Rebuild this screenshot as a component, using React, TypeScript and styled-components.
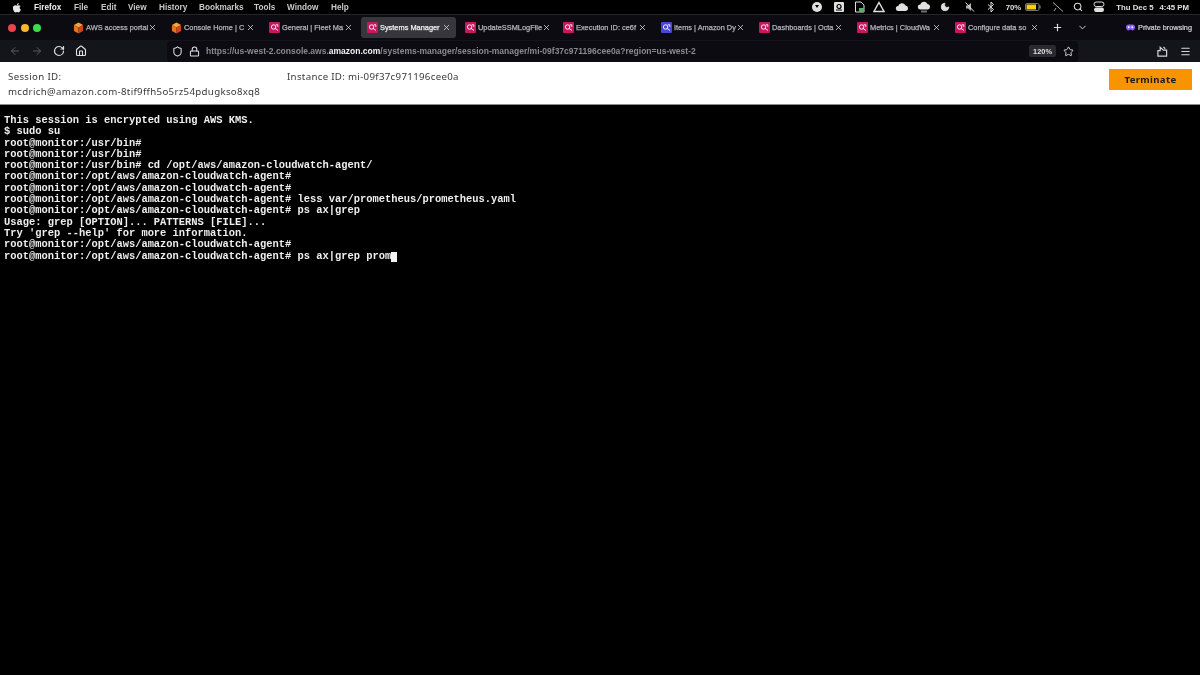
import React from 'react';
import styled, { createGlobalStyle } from 'styled-components';
import { ArrowLeft, ArrowRight, ChevronDown, Home, Lock, Menu, Moon, Plus, RotateCw, Search, Shield, Star, X } from 'lucide-react';

const GlobalStyle = createGlobalStyle`
  html, body {
    margin: 0;
    padding: 0;
    width: 1200px;
    height: 675px;
    overflow: hidden;
    background: #000;
  }
`;

const Page = styled.div`
  width: 1200px;
  height: 675px;
  display: flex;
  flex-direction: column;
  background: #000;
  filter: blur(0.4px);
  font-family: 'Liberation Sans', Arial, sans-serif;
`;

const MenuBar = styled.div`
  height: 14px;
  flex: none;
  display: flex;
  align-items: center;
  padding: 0 11px 0 12px;
  background: #000;
  color: #d0d0d0;
  font-size: 8.2px;
  font-weight: 700;
`;

const AppleSlot = styled.span`
  width: 22px;
  display: flex;
  color: #e8e8e8;
`;

const MenuItem = styled.span<{ $w: number; $strong?: boolean }>`
  width: ${(p) => p.$w}px;
  white-space: nowrap;
  color: ${(p) => (p.$strong ? '#f0f0f0' : '#c8c8c8')};
`;

const StatusArea = styled.div`
  margin-left: auto;
  display: flex;
  align-items: center;
  color: #e0e0e0;
  font-size: 7.8px;
`;

const StatusItem = styled.span<{ $ml: number }>`
  margin-left: ${(p) => p.$ml}px;
  display: flex;
  align-items: center;
  justify-content: center;
  white-space: nowrap;
`;

const TabStrip = styled.div`
  height: 26px;
  flex: none;
  display: flex;
  align-items: center;
  background: #0b0b11;
  border-top: 1px solid #24242a;
  box-sizing: border-box;
`;

const Lights = styled.div`
  width: 67px;
  flex: none;
  display: flex;
  gap: 4.5px;
  padding-left: 8px;
  box-sizing: border-box;
`;

const Light = styled.span<{ $color: string }>`
  width: 8px;
  height: 8px;
  border-radius: 50%;
  background: ${(p) => p.$color};
`;

const Tab = styled.div<{ $active?: boolean }>`
  width: 95px;
  height: 21px;
  margin-right: 3px;
  flex: none;
  display: flex;
  align-items: center;
  padding: 0 5px 0 6px;
  box-sizing: border-box;
  border-radius: 3px;
  background: ${(p) => (p.$active ? '#36363c' : 'transparent')};
  color: ${(p) => (p.$active ? '#f0f0f0' : '#b4b4b8')};
  font-size: 7.4px;
  -webkit-text-stroke: 0.25px currentColor;
`;

const TabTitle = styled.span`
  margin-left: 2px;
  white-space: nowrap;
`;

const TabClose = styled.span`
  margin-left: auto;
  display: flex;
  color: #e4e4e4;
`;

const StripButton = styled.span<{ $ml: number }>`
  margin-left: ${(p) => p.$ml}px;
  display: flex;
  color: #dcdcdc;
`;

const PrivateBadge = styled.div`
  margin-left: auto;
  margin-right: 8px;
  display: flex;
  align-items: center;
  gap: 3px;
  color: #d6d6d8;
  font-size: 7.3px;
  -webkit-text-stroke: 0.2px currentColor;
  white-space: nowrap;
`;

const Toolbar = styled.div`
  height: 22px;
  flex: none;
  display: flex;
  align-items: center;
  background: #14141b;
  padding-left: 9px;
`;

const NavButton = styled.span<{ $dim?: boolean; $w: number }>`
  width: ${(p) => p.$w}px;
  flex: none;
  display: flex;
  color: ${(p) => (p.$dim ? '#5c5c62' : '#e2e2e4')};
`;

const UrlBar = styled.div`
  width: 911px;
  height: 21px;
  margin-left: 70px;
  flex: none;
  display: flex;
  align-items: center;
  padding: 0 4px 0 5px;
  box-sizing: border-box;
  background: #0b0b11;
  border-radius: 3px;
  color: #e0e0e2;
`;

const ShieldSlot = styled.span`
  display: flex;
  margin-right: 6px;
`;

const UrlText = styled.span`
  margin-left: 6px;
  color: #8a8a8f;
  font-size: 8.5px;
  font-weight: 700;
  white-space: nowrap;
`;

const UrlHost = styled.span`
  color: #f2f2f2;
`;

const ZoomPill = styled.span`
  margin-left: auto;
  width: 27px;
  height: 12px;
  display: flex;
  align-items: center;
  justify-content: center;
  border-radius: 2px;
  background: #2a2a30;
  color: #e0e0e0;
  font-size: 7.4px;
  font-weight: 700;
`;

const StarButton = styled.span`
  margin-left: 7px;
  display: flex;
`;

const ToolRight = styled.div`
  margin-left: auto;
  margin-right: 9px;
  display: flex;
  align-items: center;
  gap: 12px;
  color: #d8d8da;
`;

const SessionHeader = styled.div`
  height: 43px;
  flex: none;
  display: flex;
  align-items: flex-start;
  padding: 7px 8px 0;
  box-sizing: border-box;
  background: #fff;
  border-bottom: 1px solid #8c8c8c;
  color: #3a3a3a;
  font-family: 'Noto Sans', Arial, sans-serif;
  font-size: 9.7px;
  line-height: 15px;
`;

const SessionCol = styled.div`
  width: 279px;
  flex: none;
  letter-spacing: 0.31px;
  white-space: nowrap;
`;

const InstanceCol = styled.div`
  letter-spacing: 0.31px;
  white-space: nowrap;
`;

const TerminateButton = styled.button`
  margin-left: auto;
  width: 83px;
  height: 21px;
  border: none;
  padding: 0;
  background: #f89400;
  color: #1b1b1b;
  font-family: 'Noto Sans', Arial, sans-serif;
  font-size: 9.6px;
  font-weight: 700;
  letter-spacing: 0.35px;
`;

const Terminal = styled.pre`
  flex: 1;
  margin: 0;
  padding: 10px 0 0 4px;
  background: #000;
  color: #efefef;
  font-family: 'Liberation Mono', 'Courier New', monospace;
  font-size: 10.42px;
  font-weight: 700;
  line-height: 11.3px;
  overflow: hidden;
`;

const Cursor = styled.span`
  display: inline-block;
  width: 6px;
  height: 10px;
  vertical-align: top;
  margin-top: 1px;
  background: #f4f4f4;
`;

const AppleLogo = () => (
  <svg width="10" height="11" viewBox="0 0 24 24" fill="currentColor">
    <path d="M16.4 1c.1 1.4-.4 2.700-1.300 3.700-.9 1-2.200 1.700-3.500 1.600-.2-1.300.5-2.700 1.300-3.600C13.800 1.700 15.200 1.100 16.400 1zM20.700 8.400c-1.500 1-2.400 2.400-2.400 4.100 0 2 1.200 3.600 3 4.300-.5 1.500-1.200 2.900-2.100 4.200-1 1.300-2 2.700-3.500 2.700s-2-.9-3.700-.9-2.300.9-3.700.9c-1.500 0-2.500-1.400-3.600-2.900C3.200 18.700 2.200 15.700 2.200 13c0-4.300 2.800-6.600 5.500-6.600 1.500 0 2.700 1 3.600 1 .9 0 2.300-1 4-1 1.800 0 3.400.8 5.400 2z" />
  </svg>
);

const AwsCube = () => (
  <svg width="11" height="12" viewBox="0 0 12 13" style={{ flex: 'none' }}>
    <path d="M6 .5 11 3.300 6 6 1 3.300z" fill="#f9a23a" />
    <path d="M1 3.300 6 6v6.500L1 9.700z" fill="#e8731f" />
    <path d="M11 3.300 6 6v6.500l5-2.800z" fill="#d4421e" />
  </svg>
);

const ServiceIcon = ({ color }: { color: string }) => (
  <svg width="11" height="11" viewBox="0 0 11 11" style={{ flex: 'none' }}>
    <rect width="11" height="11" rx="1" fill={color} />
    <circle cx="4.600" cy="5" r="2.200" fill="none" stroke="#fff" strokeWidth="0.9" />
    <path d="M6 6.300 9 8.500M6.800 2.800h2v2" fill="none" stroke="#fff" strokeWidth="0.9" />
  </svg>
);

const Glyph = ({ w = 12, children }: { w?: number; children: React.ReactNode }) => (
  <svg width={w} height="12" viewBox={`0 0 ${w} 12`} fill="currentColor">
    {children}
  </svg>
);

const tabs = [
  { title: 'AWS access portal', icon: 'aws' },
  { title: 'Console Home | C', icon: 'aws' },
  { title: 'General | Fleet Ma', icon: '#c4185f' },
  { title: 'Systems Manager', icon: '#c4185f', active: true },
  { title: 'UpdateSSMLogFile', icon: '#c4185f' },
  { title: 'Execution ID: ce6f', icon: '#c4185f' },
  { title: 'Items | Amazon Dy', icon: '#4a47d6' },
  { title: 'Dashboards | Octa', icon: '#c4185f' },
  { title: 'Metrics | CloudWa', icon: '#c4185f' },
  { title: 'Configure data so', icon: '#c4185f' },
];

const menus = [
  { label: 'Firefox', w: 40, strong: true },
  { label: 'File', w: 27 },
  { label: 'Edit', w: 27 },
  { label: 'View', w: 31 },
  { label: 'History', w: 40 },
  { label: 'Bookmarks', w: 55 },
  { label: 'Tools', w: 33 },
  { label: 'Window', w: 44 },
  { label: 'Help', w: 20 },
];

const prompt = 'root@monitor:/opt/aws/amazon-cloudwatch-agent#';

const lines = [
  'This session is encrypted using AWS KMS.',
  '$ sudo su',
  'root@monitor:/usr/bin#',
  'root@monitor:/usr/bin#',
  'root@monitor:/usr/bin# cd /opt/aws/amazon-cloudwatch-agent/',
  prompt,
  prompt,
  `${prompt} less var/prometheus/prometheus.yaml`,
  `${prompt} ps ax|grep`,
  'Usage: grep [OPTION]... PATTERNS [FILE]...',
  "Try 'grep --help' for more information.",
  prompt,
];

export default function App() {
  return (
    <Page>
      <GlobalStyle />
      <MenuBar>
        <AppleSlot>
          <AppleLogo />
        </AppleSlot>
        {menus.map((m) => (
          <MenuItem key={m.label} $w={m.w} $strong={m.strong}>
            {m.label}
          </MenuItem>
        ))}
        <StatusArea>
          <StatusItem $ml={0}>
            <Glyph>
              <circle cx="6" cy="6" r="5" />
              <path d="M4 4h4L6 7z" fill="#000" />
            </Glyph>
          </StatusItem>
          <StatusItem $ml={10}>
            <Glyph>
              <rect x="1" y="1" width="10" height="10" rx="1" />
              <circle cx="6" cy="5.500" r="2" fill="none" stroke="#000" strokeWidth="1.200" />
              <path d="M3 9h6" stroke="#000" />
            </Glyph>
          </StatusItem>
          <StatusItem $ml={9}>
            <Glyph w={11}>
              <path d="M1.500 1H7l3 3v7H1.500z" fill="none" stroke="currentColor" />
              <rect x="5" y="7" width="5" height="4" fill="#49b86a" />
            </Glyph>
          </StatusItem>
          <StatusItem $ml={8}>
            <Glyph>
              <path d="M6 1.500 11 10.500H1z" fill="none" stroke="currentColor" strokeWidth="1.400" />
            </Glyph>
          </StatusItem>
          <StatusItem $ml={10}>
            <Glyph w={14}>
              <path d="M3.500 10a2.500 2.500 0 0 1-.3-5A4 4 0 0 1 10.500 4.500 2.800 2.800 0 0 1 11 10z" />
            </Glyph>
          </StatusItem>
          <StatusItem $ml={8}>
            <Glyph w={14}>
              <path d="M3.500 8.500a2.500 2.500 0 0 1-.3-5A4 4 0 0 1 10.500 3 2.800 2.800 0 0 1 11 8.500z" />
              <path d="M5 9.500v2M7 9.500v2M9 9.500v2" stroke="currentColor" />
            </Glyph>
          </StatusItem>
          <StatusItem $ml={9}>
            <Moon size={10} fill="currentColor" />
          </StatusItem>
          <StatusItem $ml={14}>
            <Glyph>
              <path d="M2 4.500h2L7 2v8L4 7.500H2z" opacity="0.8" />
              <path d="M1.500 1.500 10 10.500" stroke="currentColor" />
            </Glyph>
          </StatusItem>
          <StatusItem $ml={11}>
            <Glyph w={8}>
              <path d="M1 3.500 6.500 8.500 4 11V1l2.500 2.500L1 8.500" fill="none" stroke="currentColor" />
            </Glyph>
          </StatusItem>
          <StatusItem $ml={11}>70%</StatusItem>
          <StatusItem $ml={4}>
            <svg width="16" height="8" viewBox="0 0 16 8">
              <rect x="0.500" y="0.500" width="13.500" height="7" rx="1.500" fill="none" stroke="#777" />
              <rect x="1.500" y="1.500" width="9.500" height="5" fill="#f2cf1d" />
              <rect x="14.500" y="2.500" width="1" height="3" fill="#999" />
            </svg>
          </StatusItem>
          <StatusItem $ml={11}>
            <Glyph>
              <path d="M1 1.500 11 10.500M4 7l-2 3" stroke="#aaa" />
            </Glyph>
          </StatusItem>
          <StatusItem $ml={9}>
            <Search size={10} strokeWidth={2.500} />
          </StatusItem>
          <StatusItem $ml={10}>
            <Glyph>
              <rect x="1" y="1" width="10" height="4.500" rx="2.200" fill="none" stroke="currentColor" />
              <rect x="1" y="6.500" width="10" height="4.500" rx="2.200" />
            </Glyph>
          </StatusItem>
          <StatusItem $ml={11}>Thu Dec 5</StatusItem>
          <StatusItem $ml={6}>4:45 PM</StatusItem>
        </StatusArea>
      </MenuBar>

      <TabStrip>
        <Lights>
          <Light $color="#e8444a" />
          <Light $color="#f5b82e" />
          <Light $color="#3ddc4e" />
        </Lights>
        {tabs.map((t) => (
          <Tab key={t.title} $active={t.active}>
            {t.icon === 'aws' ? <AwsCube /> : <ServiceIcon color={t.icon} />}
            <TabTitle>{t.title}</TabTitle>
            <TabClose>
              <X size={9} strokeWidth={2} />
            </TabClose>
          </Tab>
        ))}
        <StripButton $ml={5}>
          <Plus size={11} strokeWidth={2.500} />
        </StripButton>
        <StripButton $ml={14}>
          <ChevronDown size={11} strokeWidth={2} />
        </StripButton>
        <PrivateBadge>
          <svg width="9" height="7" viewBox="0 0 18 14">
            <path d="M5 1h8a5 5 0 0 1 5 5c0 4-2 7-5 7-2 0-3-2-4-2s-2 2-4 2c-3 0-5-3-5-7a5 5 0 0 1 5-5z" fill="#8b5cf6" />
            <circle cx="5.500" cy="6.500" r="2" fill="#fff" />
            <circle cx="12.500" cy="6.500" r="2" fill="#fff" />
          </svg>
          Private browsing
        </PrivateBadge>
      </TabStrip>

      <Toolbar>
        <NavButton $dim $w={22}>
          <ArrowLeft size={12} />
        </NavButton>
        <NavButton $dim $w={22}>
          <ArrowRight size={12} />
        </NavButton>
        <NavButton $w={22}>
          <RotateCw size={12} strokeWidth={2.400} />
        </NavButton>
        <NavButton $w={22}>
          <Home size={12} strokeWidth={2.200} />
        </NavButton>
        <UrlBar>
          <ShieldSlot>
            <Shield size={11} strokeWidth={2.200} />
          </ShieldSlot>
          <Lock size={11} strokeWidth={2.200} />
          <UrlText>
            https://us-west-2.console.aws.<UrlHost>amazon.com</UrlHost>
            /systems-manager/session-manager/mi-09f37c971196cee0a?region=us-west-2
          </UrlText>
          <ZoomPill>120%</ZoomPill>
          <StarButton>
            <Star size={11} strokeWidth={2} />
          </StarButton>
        </UrlBar>
        <ToolRight>
          <svg width="11" height="11" viewBox="0 0 12 12" fill="none" stroke="currentColor" strokeWidth="1.300">
            <path d="M1 5h2.500V1.500L7 4.500h3.500V11H1zM7 1l2 2" />
          </svg>
          <Menu size={11} strokeWidth={2.500} />
        </ToolRight>
      </Toolbar>

      <SessionHeader>
        <SessionCol>
          Session ID:
          <br />
          mcdrich@amazon.com-8tif9ffh5o5rz54pdugkso8xq8
        </SessionCol>
        <InstanceCol>Instance ID: mi-09f37c971196cee0a</InstanceCol>
        <TerminateButton>Terminate</TerminateButton>
      </SessionHeader>

      <Terminal>
        {lines.join('\n')}
        {'\n'}
        {prompt} ps ax|grep prom
        <Cursor />
      </Terminal>
    </Page>
  );
}
